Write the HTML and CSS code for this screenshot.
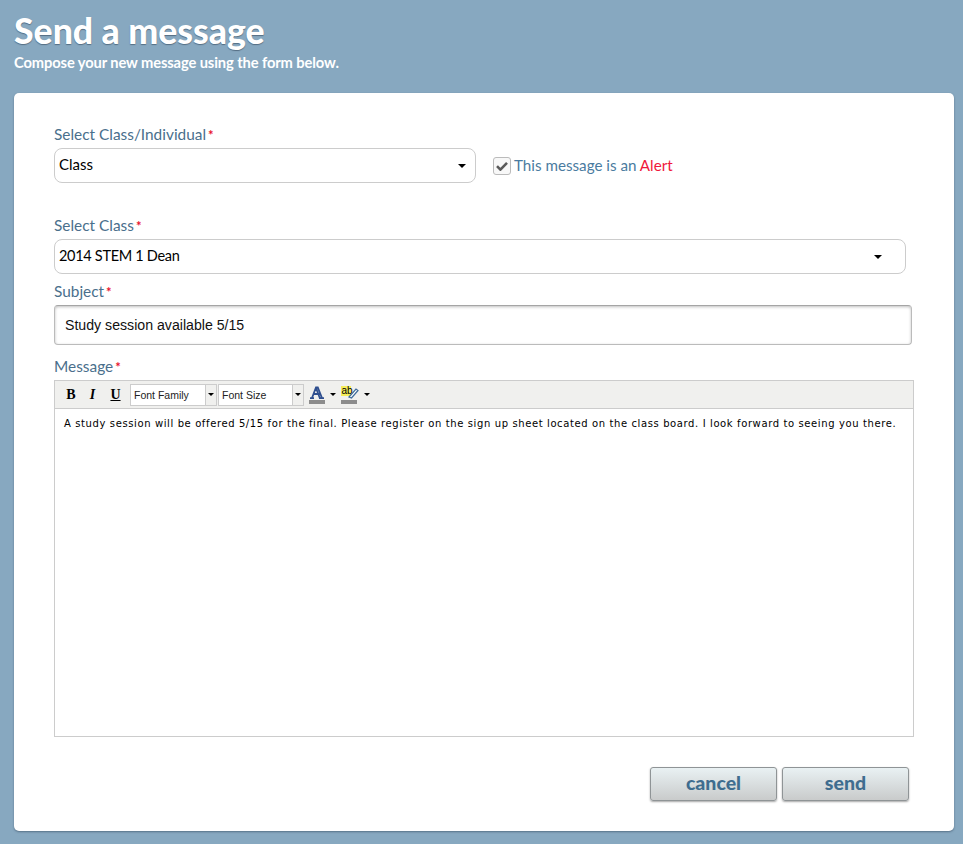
FILE: index.html
```html
<!DOCTYPE html>
<html lang="en">
<head>
  <meta charset="utf-8" />
  <title>Send a message</title>
  <link rel="stylesheet" href="styles.css">
</head>
<body>
  <div class="page-head">
    <h1>Send a message</h1>
    <p>Compose your new message using the form below.</p>
  </div>

  <div class="card">
    <div class="label">Select Class/Individual<span class="req">*</span></div>
    <div class="type-row">
      <div class="select select-type">Class<span class="caret"></span></div>
      <div class="alert-opt">
        <span class="check">
          <svg width="12" height="10" viewBox="0 0 12 10"><path d="M1 5.2 L4.4 8.6 L11 1.8" fill="none" stroke="#5a5a5a" stroke-width="2.6"/></svg>
        </span>
        <span class="alert-text">This message is an <span class="alert-word">Alert</span></span>
      </div>
    </div>

    <div class="label label-class">Select Class<span class="req">*</span></div>
    <div class="select select-class">2014 STEM 1 Dean<span class="caret"></span></div>

    <div class="label label-subject">Subject<span class="req">*</span></div>
    <input class="subject" type="text" value="Study session available 5/15">

    <div class="label label-message">Message<span class="req">*</span></div>
    <div class="editor">
      <div class="toolbar">
        <span class="tool tool-b">B</span>
        <span class="tool tool-i">I</span>
        <span class="tool tool-u">U</span>
        <span class="combo combo-family"><span class="combo-text">Font Family</span><span class="combo-arrow"><span class="caret-sm"></span></span></span>
        <span class="combo combo-size"><span class="combo-text">Font Size</span><span class="combo-arrow"><span class="caret-sm"></span></span></span>
        <span class="color-btn color-fore">
          <svg width="16" height="18" viewBox="0 0 16 18">
            <path d="M1 12.2 L5 12.2 M10 12.2 L15 12.2 M3 12 L7 1.5 L8.8 1.5 L13 12 M5 8 L10.8 8 M7.2 2.5 L10.8 12" fill="none" stroke="#2f4f8f" stroke-width="1.8"/>
            <rect x="0" y="14" width="16" height="4" fill="#8c8c8c"/>
          </svg>
          <span class="caret-sm"></span>
        </span>
        <span class="color-btn color-back">
          <svg width="18" height="18" viewBox="0 0 18 18">
            <rect x="0" y="0" width="10" height="10" fill="#f5ee5a"/>
            <text x="0.5" y="8" class="ab-text">ab</text>
            <path d="M8 11 L15 3 L17 4.5 L10.5 12 Z" fill="#fff" stroke="#3f6c9a" stroke-width="1.2"/>
            <rect x="0" y="14" width="16" height="4" fill="#8c8c8c"/>
          </svg>
          <span class="caret-sm"></span>
        </span>
      </div>
      <div class="editor-body">A study session will be offered 5/15 for the final. Please register on the sign up sheet located on the class board. I look forward to seeing you there.</div>
    </div>

    <div class="actions">
      <button class="btn" type="button">cancel</button>
      <button class="btn" type="button">send</button>
    </div>
  </div>
</body>
</html>
```

FILE: styles.css
```css
html { background: #87a8c0; }
body { margin: 0; padding: 0 9px 13px 14px; font-family: 'Lato', 'Open Sans', sans-serif; color: #000; }

.page-head { height: 93px; color: #fff; box-sizing: border-box; padding-top: 11px; }
.page-head h1 { margin: 0; font-size: 35.6px; line-height: 40px; font-weight: 900; text-shadow: 0 1px 1px rgba(50,70,90,.6); }
.page-head p { margin: 1px 0 0; font-size: 14.7px; line-height: 20px; font-weight: 700; letter-spacing: -.1px; }

.card { background: #fff; border-radius: 5px; height: 738px; box-sizing: border-box; padding: 30px 40px 0; box-shadow: 0 1px 2px rgba(40,60,80,.5); }

.label { font-size: 15.4px; line-height: 22px; color: #4a6f8c; height: 25px; }
.req { color: #e8112d; font-size: 13px; font-weight: 700; margin-left: 2px; vertical-align: 0; line-height: 10px; }
.label-class { margin-top: 31px; }
.label-subject { margin-top: 6px; }
.label-message { margin-top: 10px; }

.select { position: relative; box-sizing: border-box; height: 35px; line-height: 31px; padding-left: 4px; font-size: 15px; border: 1px solid #ccc; border-radius: 8px; background: #fff; font-family: 'Lato', sans-serif; }
.select-type { width: 422px; }
.select-class { width: 852px; font-size: 14.5px; letter-spacing: -.3px; }
.select-class .caret { right: 23px; }
.caret { position: absolute; right: 9px; top: 15px; width: 0; height: 0; border-left: 4.5px solid transparent; border-right: 4.5px solid transparent; border-top: 4.5px solid #000; }

.type-row { display: flex; align-items: center; }
.alert-opt { display: flex; align-items: center; margin-left: 17px; }
.check { box-sizing: border-box; width: 18px; height: 18px; border: 1px solid #bbb; border-radius: 3px; display: flex; align-items: center; justify-content: center; background: #f8f8f8; }
.alert-text { margin: 0 0 1px 3px; font-size: 15.2px; color: #4a7ba0; }
.alert-word { color: #f0183c; }

.subject { display: block; box-sizing: border-box; width: 858px; height: 40px; padding: 0 10px; border: 1px solid #bbb; border-top-color: #a5a5a5; border-radius: 4px; box-shadow: inset 0 1px 3px rgba(0,0,0,.25); font-family: 'Liberation Sans', Arial, sans-serif; font-size: 14.15px; color: #111; outline: none; }

.editor { box-sizing: border-box; width: 860px; height: 357px; border: 1px solid #ccc; }
.toolbar { display: flex; align-items: center; height: 27px; background: #f0f0ee; border-bottom: 1px solid #ccc; box-sizing: content-box; padding-left: 4px; }
.tool { width: 23px; text-align: center; font-family: 'Liberation Serif', serif; font-size: 14px; font-weight: 700; }
.tool-i { font-style: italic; margin-left: -2px; }
.tool-u { text-decoration: underline; margin-right: 2px; }
.tool-b { width: 24px; }

.combo { display: flex; box-sizing: border-box; height: 22px; border: 1px solid #ccc; background: #fff; font-family: 'Liberation Sans', Arial, sans-serif; font-size: 10.5px; color: #222; }
.combo-family { width: 87px; margin-left: 1px; }
.combo-size { width: 86px; margin-left: 1px; }
.combo-text { flex: 1; line-height: 20px; padding-left: 3px; }
.combo-arrow { width: 10px; background: #f0f0ee; border-left: 1px solid #ccc; display: flex; align-items: center; justify-content: center; }
.caret-sm { display: inline-block; width: 0; height: 0; border-left: 3px solid transparent; border-right: 3px solid transparent; border-top: 3px solid #000; }

.color-btn { display: flex; align-items: center; gap: 5px; }
.color-fore { margin-left: 5px; }
.color-back { margin-left: 5px; }
.ab-text { font-family: 'Liberation Sans', Arial, sans-serif; font-size: 10px; fill: #000; }

.editor-body { padding: 8px 9px; font-family: 'DejaVu Sans', Verdana, sans-serif; font-size: 10px; letter-spacing: .61px; line-height: 13px; color: #000; white-space: nowrap; }

.actions { display: flex; justify-content: flex-end; gap: 5px; width: 855px; margin-top: 30px; }
.btn { box-sizing: border-box; width: 127px; height: 34px; border: 1px solid #8f9496; border-radius: 3px; background: linear-gradient(#e9f1f3, #c9cbcb); box-shadow: 0 1px 2px rgba(0,0,0,.35); font-family: 'Lato', sans-serif; font-size: 19.5px; font-weight: 900; color: #3f6d8f; padding: 0 0 4px; }
```
